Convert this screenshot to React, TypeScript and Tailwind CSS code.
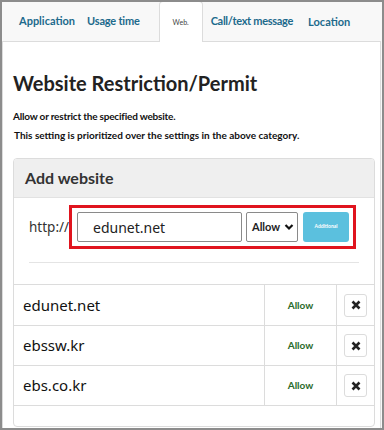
import React from "react";

const sites = ["edunet.net", "ebssw.kr", "ebs.co.kr"];

const App = () => {
  return (
    <div
      className="w-[384px] h-[430px] border-2 border-[#8c8c8c] bg-[#f8f8f8] flex flex-col overflow-hidden"
      style={{ fontFamily: "Lato, 'Noto Sans', sans-serif" }}
    >
      {/* Tabs */}
      <div className="h-[39px] flex items-end shrink-0 text-[11px] font-bold text-[#1d6a8c] whitespace-nowrap">
        <span className="ml-[17px] mb-[12px]">Application</span>
        <span className="ml-[12px] mb-[12px] tracking-[-0.2px]">Usage time</span>
        <div className="ml-[19px] w-[44px] h-[41px] -mb-[1px] bg-white border border-b-0 border-[#dcdcdc] rounded-t-[4px] flex items-center justify-center text-[7px] font-normal text-[#444] relative z-10">
          Web.
        </div>
        <span className="ml-[8px] mb-[12px] tracking-[-0.3px]">Call/text message</span>
        <span className="ml-[15px] mb-[11px]">Location</span>
      </div>

      {/* Panel */}
      <div className="flex-1 bg-white border-t border-x border-[#dcdcdc] mr-[1px] pl-[10px] pt-[29px]">
        <h1 className="text-[20px] leading-[24px] font-bold text-[#222]">Website Restriction/Permit</h1>
        <p className="mt-[14px] text-[10px] leading-[14px] font-bold text-[#111] tracking-[-0.2px]">Allow or restrict the specified website.</p>
        <p className="mt-[5px] ml-[1px] text-[10px] leading-[14px] font-bold text-[#111]">This setting is prioritized over the settings in the above category.</p>

        {/* Card */}
        <div className="mt-[16px] w-[362px] border border-[#dcdcdc] rounded-[4px] overflow-hidden">
          <div className="h-[39px] bg-[#efefef] border-b border-[#e2e2e2] flex items-center pl-[11px] text-[16px] font-bold text-[#333]">
            Add website
          </div>
          <div className="px-[15px] pt-[7px]">
            <div className="flex items-center">
              <span className="w-[40px] text-[13.5px] text-[#333] pt-[1px]" style={{ fontFamily: "'Noto Sans', sans-serif" }}>
                http://
              </span>
              <div className="w-[287px] h-[44px] border-[3px] border-[#e0141e] flex items-center pl-[5px] gap-[4px]">
                <div
                  className="w-[165px] h-[30px] border border-[#8a8a8a] rounded-[2px] flex items-center pl-[15px] text-[14px] text-[#222]"
                  style={{ fontFamily: "'Noto Sans', sans-serif" }}
                >
                  edunet.net
                </div>
                <div className="w-[52px] h-[30px] border border-[#8a8a8a] rounded-[2px] flex items-center pl-[5px] gap-[4px] text-[11px] font-bold text-[#222]">
                  Allow
                  <svg width="10" height="8" viewBox="0 0 10 8">
                    <path d="M1.5 2 L5 5.5 L8.5 2" stroke="#111" strokeWidth="2.2" fill="none" />
                  </svg>
                </div>
                <div className="ml-[1px] w-[46px] h-[30px] bg-[#5bc0de] rounded-[3px] flex items-center justify-center text-[5px] font-bold text-white">
                  Additional
                </div>
              </div>
            </div>
            <div className="mt-[13px] h-px bg-[#e4e4e4]" />
          </div>

          {/* Table */}
          <div className="mt-[21px] border-y border-[#dcdcdc]">
            {sites.map((s, i) => (
              <div key={s} className={`h-[40px] flex ${i > 0 ? "border-t border-[#dcdcdc]" : ""}`}>
                <div
                  className="w-[251px] border-r border-[#dcdcdc] flex items-center pl-[9px] text-[15px] text-[#111]"
                  style={{ fontFamily: "'Noto Sans', sans-serif" }}
                >
                  {s}
                </div>
                <div className="w-[72px] border-r border-[#dcdcdc] flex items-center justify-center text-[10px] font-bold text-[#2a6a2a]">
                  Allow
                </div>
                <div className="flex-1 flex items-center justify-center">
                  <div className="w-[23px] h-[23px] border border-[#dcdcdc] rounded-[3px] bg-white flex items-center justify-center">
                    <svg width="10" height="10" viewBox="0 0 10 10">
                      <path d="M1.5 1.5 L8.5 8.5 M8.5 1.5 L1.5 8.5" stroke="#222" strokeWidth="2.6" />
                    </svg>
                  </div>
                </div>
              </div>
            ))}
          </div>
          <div className="h-[20px]" />
        </div>
      </div>
    </div>
  );
};

export default App;
